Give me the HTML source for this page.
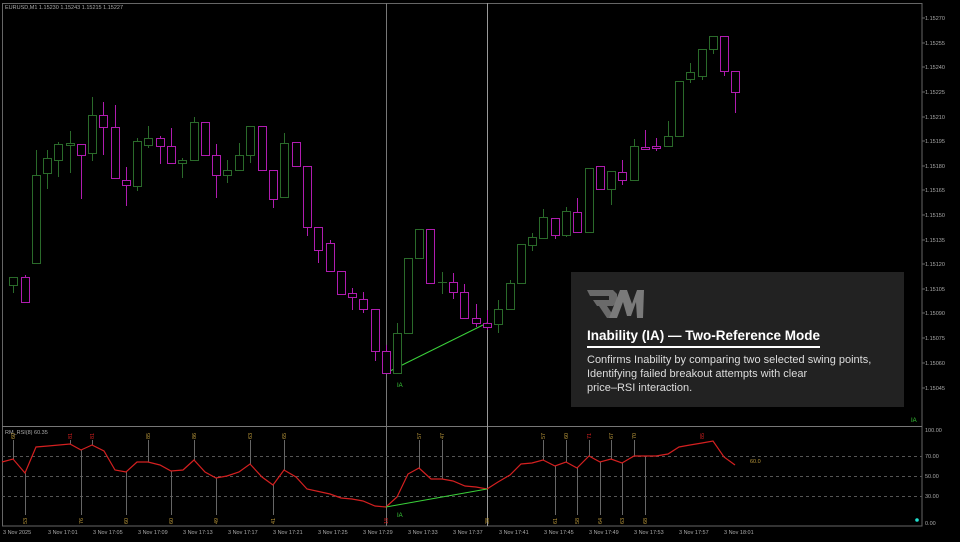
<!DOCTYPE html>
<html><head><meta charset="utf-8"><style>
html,body{margin:0;padding:0;background:#000;width:960px;height:542px;overflow:hidden}
svg{position:absolute;left:0;top:0}
.t{font-family:"Liberation Sans",sans-serif;font-size:5.5px;fill:#aaa}
.r{font-family:"Liberation Sans",sans-serif;font-size:5.5px;fill:#b8963a}
.rr{font-family:"Liberation Sans",sans-serif;font-size:5.5px;fill:#d02020}
#panel{position:absolute;left:571px;top:272px;width:333px;height:135px;background:#222}
#title{position:absolute;left:16px;top:56px;font-family:"Liberation Sans",sans-serif;font-size:13.5px;color:#fff;font-weight:bold;letter-spacing:0px;padding-bottom:3px;border-bottom:2px solid #fff}
#body{position:absolute;left:16px;top:81px;font-family:"Liberation Sans",sans-serif;font-size:11px;line-height:14px;color:#ddd;width:320px}
</style></head><body>
<svg width="960" height="542" viewBox="0 0 960 542">
<g fill="none" stroke="#888" stroke-width="1">
<rect x="2.5" y="3.5" width="919.5" height="522.5" stroke="#666"/>
<line x1="2" y1="426.5" x2="922" y2="426.5" stroke="#777"/>
<line x1="386.5" y1="3" x2="386.5" y2="526" stroke="#777"/>
<line x1="487.5" y1="3" x2="487.5" y2="526" stroke="#999"/>
</g>
<text x="5" y="9" class="t">EURUSD,M1  1.15230 1.15243 1.15215 1.15227</text>
<g class="t">
<text x="925" y="20">1.15270</text><text x="925" y="45">1.15255</text><text x="925" y="69">1.15240</text><text x="925" y="94">1.15225</text><text x="925" y="119">1.15210</text><text x="925" y="143">1.15195</text><text x="925" y="168">1.15180</text><text x="925" y="192">1.15165</text><text x="925" y="217">1.15150</text><text x="925" y="242">1.15135</text><text x="925" y="266">1.15120</text><text x="925" y="291">1.15105</text><text x="925" y="315">1.15090</text><text x="925" y="340">1.15075</text><text x="925" y="365">1.15060</text><text x="925" y="390">1.15045</text>
<text x="925" y="432">100.00</text><text x="925" y="458">70.00</text><text x="925" y="478">50.00</text><text x="925" y="498">30.00</text><text x="925" y="525">0.00</text>
<text x="3" y="534">3 Nov 2025</text><text x="48" y="534">3 Nov 17:01</text><text x="93" y="534">3 Nov 17:05</text><text x="138" y="534">3 Nov 17:09</text><text x="183" y="534">3 Nov 17:13</text><text x="228" y="534">3 Nov 17:17</text><text x="273" y="534">3 Nov 17:21</text><text x="318" y="534">3 Nov 17:25</text><text x="363" y="534">3 Nov 17:29</text><text x="408" y="534">3 Nov 17:33</text><text x="453" y="534">3 Nov 17:37</text><text x="499" y="534">3 Nov 17:41</text><text x="544" y="534">3 Nov 17:45</text><text x="589" y="534">3 Nov 17:49</text><text x="634" y="534">3 Nov 17:53</text><text x="679" y="534">3 Nov 17:57</text><text x="724" y="534">3 Nov 18:01</text>
<text x="5" y="434">RM_RSI(8) 60.35</text>
</g>
<g stroke="#666" stroke-width="1">
<line x1="922" y1="18" x2="925" y2="18"/><line x1="922" y1="43" x2="925" y2="43"/><line x1="922" y1="67" x2="925" y2="67"/><line x1="922" y1="92" x2="925" y2="92"/><line x1="922" y1="117" x2="925" y2="117"/><line x1="922" y1="141" x2="925" y2="141"/><line x1="922" y1="166" x2="925" y2="166"/><line x1="922" y1="190" x2="925" y2="190"/><line x1="922" y1="215" x2="925" y2="215"/><line x1="922" y1="240" x2="925" y2="240"/><line x1="922" y1="264" x2="925" y2="264"/><line x1="922" y1="289" x2="925" y2="289"/><line x1="922" y1="313" x2="925" y2="313"/><line x1="922" y1="338" x2="925" y2="338"/><line x1="922" y1="363" x2="925" y2="363"/><line x1="922" y1="388" x2="925" y2="388"/>
</g>
<g stroke="#555" stroke-dasharray="3,3" stroke-width="1">
<line x1="2" y1="456.5" x2="922" y2="456.5"/><line x1="2" y1="476.5" x2="922" y2="476.5"/><line x1="2" y1="496.5" x2="922" y2="496.5"/>
</g>
<g stroke="#666" stroke-width="1">
<line x1="13.5" y1="440" x2="13.5" y2="459"/><line x1="70.5" y1="440" x2="70.5" y2="444"/><line x1="92.5" y1="440" x2="92.5" y2="445"/><line x1="148.5" y1="440" x2="148.5" y2="462"/><line x1="194.5" y1="440" x2="194.5" y2="460"/><line x1="250.5" y1="440" x2="250.5" y2="464"/><line x1="284.5" y1="440" x2="284.5" y2="470"/><line x1="419.5" y1="440" x2="419.5" y2="468"/><line x1="442.5" y1="440" x2="442.5" y2="479"/><line x1="543.5" y1="440" x2="543.5" y2="460"/><line x1="566.5" y1="440" x2="566.5" y2="462"/><line x1="589.5" y1="440" x2="589.5" y2="456"/><line x1="611.5" y1="440" x2="611.5" y2="459"/><line x1="634.5" y1="440" x2="634.5" y2="456"/>
<line x1="25.5" y1="473" x2="25.5" y2="515"/><line x1="81.5" y1="450" x2="81.5" y2="515"/><line x1="126.5" y1="472" x2="126.5" y2="515"/><line x1="171.5" y1="471" x2="171.5" y2="515"/><line x1="216.5" y1="478" x2="216.5" y2="515"/><line x1="273.5" y1="485" x2="273.5" y2="515"/><line x1="555.5" y1="466" x2="555.5" y2="515"/><line x1="577.5" y1="468" x2="577.5" y2="515"/><line x1="600.5" y1="462" x2="600.5" y2="515"/><line x1="622.5" y1="463" x2="622.5" y2="515"/><line x1="645.5" y1="456" x2="645.5" y2="515"/>
</g>
<g class="r">
<text transform="translate(15,439) rotate(-90)">60</text><text transform="translate(150,439) rotate(-90)">85</text><text transform="translate(196,439) rotate(-90)">86</text><text transform="translate(252,439) rotate(-90)">63</text><text transform="translate(286,439) rotate(-90)">65</text><text transform="translate(421,439) rotate(-90)">57</text><text transform="translate(444,439) rotate(-90)">47</text><text transform="translate(545,439) rotate(-90)">57</text><text transform="translate(568,439) rotate(-90)">60</text><text transform="translate(613,439) rotate(-90)">67</text><text transform="translate(636,439) rotate(-90)">70</text>
<text transform="translate(27,524) rotate(-90)">53</text><text transform="translate(83,524) rotate(-90)">76</text><text transform="translate(128,524) rotate(-90)">60</text><text transform="translate(173,524) rotate(-90)">60</text><text transform="translate(218,524) rotate(-90)">49</text><text transform="translate(275,524) rotate(-90)">41</text><text transform="translate(489,524) rotate(-90)">38</text><text transform="translate(557,524) rotate(-90)">61</text><text transform="translate(579,524) rotate(-90)">58</text><text transform="translate(602,524) rotate(-90)">64</text><text transform="translate(624,524) rotate(-90)">63</text><text transform="translate(647,524) rotate(-90)">68</text>
<text x="750" y="463">60.0</text>
</g>
<g class="rr">
<text transform="translate(72,439) rotate(-90)">81</text><text transform="translate(94,439) rotate(-90)">81</text><text transform="translate(591,439) rotate(-90)">71</text><text transform="translate(704,439) rotate(-90)">85</text><text transform="translate(388,524) rotate(-90)">18</text>
</g>
<polyline fill="none" stroke="#d42020" stroke-width="1.2" points="2,462 13,459 25,473 36,447 48,446 70,444 81,450 92,445 104,451 115,470 126,472 137,462 148,462 160,465 171,471 183,470 194,460 205,472 216,478 227,476 239,472 250,464 262,477 273,485 284,470 296,477 307,489 330,494 341,498 352,499 363,501 375,506 386,507 397,497 408,474 419,468 431,479 442,479 453,481 465,486 476,487 487,489 498,482 510,475 521,464 532,463 543,460 555,466 566,462 577,468 589,456 600,462 611,459 622,463 634,456 645,456 656,456 668,454 679,447 690,445 702,443 713,441 724,457 735,465"/>
<line x1="386" y1="507" x2="487" y2="489" stroke="#3ad03a" stroke-width="1"/>
<line x1="386" y1="373" x2="487" y2="323" stroke="#3ad03a" stroke-width="1"/>
<text x="397" y="387" font-family="Liberation Sans" font-size="6" fill="#3ad03a">IA</text>
<text x="397" y="517" font-family="Liberation Sans" font-size="6" fill="#3ad03a">IA</text>
<text x="911" y="422" font-family="Liberation Sans" font-size="6" fill="#3ad03a">IA</text>
<circle cx="917" cy="520" r="1.8" fill="#20e0d0"/>
<g stroke="#2a6a2a" fill="#000" stroke-width="1">
<line x1="13.5" y1="277" x2="13.5" y2="293"/><rect x="9.5" y="277.5" width="8" height="8"/>
<line x1="36.5" y1="150" x2="36.5" y2="263"/><rect x="32.5" y="175.5" width="8" height="88"/>
<line x1="47.5" y1="150" x2="47.5" y2="189"/><rect x="43.5" y="158.5" width="8" height="15"/>
<line x1="58.5" y1="142" x2="58.5" y2="177"/><rect x="54.5" y="144.5" width="8" height="16"/>
<line x1="70.5" y1="131" x2="70.5" y2="173"/><rect x="66.5" y="143.5" width="8" height="2"/>
<line x1="92.5" y1="97" x2="92.5" y2="161"/><rect x="88.5" y="115.5" width="8" height="38"/>
<line x1="137.5" y1="138" x2="137.5" y2="191"/><rect x="133.5" y="141.5" width="8" height="45"/>
<line x1="148.5" y1="126" x2="148.5" y2="148"/><rect x="144.5" y="138.5" width="8" height="7"/>
<line x1="182.5" y1="158" x2="182.5" y2="178"/><rect x="178.5" y="160.5" width="8" height="3"/>
<line x1="194.5" y1="117" x2="194.5" y2="160"/><rect x="190.5" y="122.5" width="8" height="38"/>
<line x1="227.5" y1="160" x2="227.5" y2="183"/><rect x="223.5" y="170.5" width="8" height="5"/>
<line x1="239.5" y1="143" x2="239.5" y2="163"/><rect x="235.5" y="155.5" width="8" height="15"/>
<line x1="250.5" y1="126" x2="250.5" y2="163"/><rect x="246.5" y="126.5" width="8" height="29"/>
<line x1="284.5" y1="133" x2="284.5" y2="197"/><rect x="280.5" y="143.5" width="8" height="54"/>
<line x1="397.5" y1="323" x2="397.5" y2="373"/><rect x="393.5" y="333.5" width="8" height="40"/>
<rect x="404.5" y="258.5" width="8" height="75"/>
<rect x="415.5" y="229.5" width="8" height="29"/>
<line x1="442.5" y1="272" x2="442.5" y2="294"/><line x1="438" y1="282.5" x2="447" y2="282.5"/>
<line x1="498.5" y1="300" x2="498.5" y2="333"/><rect x="494.5" y="309.5" width="8" height="15"/>
<line x1="510.5" y1="280" x2="510.5" y2="309"/><rect x="506.5" y="283.5" width="8" height="26"/>
<rect x="517.5" y="244.5" width="8" height="39"/>
<line x1="532.5" y1="233" x2="532.5" y2="251"/><rect x="528.5" y="237.5" width="8" height="8"/>
<line x1="543.5" y1="209" x2="543.5" y2="238"/><rect x="539.5" y="217.5" width="8" height="21"/>
<line x1="566.5" y1="207" x2="566.5" y2="237"/><rect x="562.5" y="211.5" width="8" height="24"/>
<rect x="585.5" y="168.5" width="8" height="64"/>
<line x1="611.5" y1="171" x2="611.5" y2="205"/><rect x="607.5" y="171.5" width="8" height="18"/>
<line x1="634.5" y1="139" x2="634.5" y2="180"/><rect x="630.5" y="146.5" width="8" height="34"/>
<line x1="668.5" y1="121" x2="668.5" y2="146"/><rect x="664.5" y="136.5" width="8" height="10"/>
<rect x="675.5" y="81.5" width="8" height="55"/>
<line x1="690.5" y1="63" x2="690.5" y2="83"/><rect x="686.5" y="72.5" width="8" height="7"/>
<line x1="702.5" y1="49" x2="702.5" y2="80"/><rect x="698.5" y="49.5" width="8" height="27"/>
<line x1="713.5" y1="36" x2="713.5" y2="54"/><rect x="709.5" y="36.5" width="8" height="13"/>
</g>
<g stroke="#b01cb0" fill="#000" stroke-width="1">
<line x1="25.5" y1="275" x2="25.5" y2="302"/><rect x="21.5" y="277.5" width="8" height="25"/>
<line x1="81.5" y1="144" x2="81.5" y2="199"/><rect x="77.5" y="144.5" width="8" height="11"/>
<line x1="103.5" y1="102" x2="103.5" y2="155"/><rect x="99.5" y="115.5" width="8" height="12"/>
<line x1="115.5" y1="105" x2="115.5" y2="178"/><rect x="111.5" y="127.5" width="8" height="51"/>
<line x1="126.5" y1="167" x2="126.5" y2="206"/><rect x="122.5" y="180.5" width="8" height="5"/>
<line x1="160.5" y1="136" x2="160.5" y2="164"/><rect x="156.5" y="138.5" width="8" height="8"/>
<line x1="171.5" y1="128" x2="171.5" y2="163"/><rect x="167.5" y="146.5" width="8" height="17"/>
<rect x="201.5" y="122.5" width="8" height="33"/>
<line x1="216.5" y1="144" x2="216.5" y2="198"/><rect x="212.5" y="155.5" width="8" height="20"/>
<rect x="258.5" y="126.5" width="8" height="44"/>
<line x1="273.5" y1="170" x2="273.5" y2="208"/><rect x="269.5" y="170.5" width="8" height="29"/>
<rect x="292.5" y="142.5" width="8" height="24"/>
<line x1="307.5" y1="166" x2="307.5" y2="236"/><rect x="303.5" y="166.5" width="8" height="61"/>
<line x1="318.5" y1="227" x2="318.5" y2="263"/><rect x="314.5" y="227.5" width="8" height="23"/>
<line x1="330.5" y1="240" x2="330.5" y2="271"/><rect x="326.5" y="243.5" width="8" height="28"/>
<rect x="337.5" y="271.5" width="8" height="23"/>
<line x1="352.5" y1="288" x2="352.5" y2="310"/><rect x="348.5" y="293.5" width="8" height="4"/>
<line x1="363.5" y1="292" x2="363.5" y2="313"/><rect x="359.5" y="299.5" width="8" height="10"/>
<line x1="375.5" y1="309" x2="375.5" y2="361"/><rect x="371.5" y="309.5" width="8" height="42"/>
<line x1="386.5" y1="345" x2="386.5" y2="373"/><rect x="382.5" y="351.5" width="8" height="22"/>
<rect x="426.5" y="229.5" width="8" height="54"/>
<line x1="453.5" y1="273" x2="453.5" y2="299"/><rect x="449.5" y="282.5" width="8" height="10"/>
<line x1="464.5" y1="284" x2="464.5" y2="318"/><rect x="460.5" y="292.5" width="8" height="26"/>
<line x1="476.5" y1="304" x2="476.5" y2="327"/><rect x="472.5" y="318.5" width="8" height="5"/>
<line x1="487.5" y1="310" x2="487.5" y2="330"/><rect x="483.5" y="323.5" width="8" height="4"/>
<line x1="555.5" y1="218" x2="555.5" y2="239"/><rect x="551.5" y="218.5" width="8" height="17"/>
<line x1="577.5" y1="198" x2="577.5" y2="232"/><rect x="573.5" y="212.5" width="8" height="20"/>
<rect x="596.5" y="166.5" width="8" height="23"/>
<line x1="622.5" y1="160" x2="622.5" y2="185"/><rect x="618.5" y="172.5" width="8" height="8"/>
<line x1="645.5" y1="130" x2="645.5" y2="150"/><rect x="641.5" y="147.5" width="8" height="2"/>
<line x1="656.5" y1="138" x2="656.5" y2="151"/><rect x="652.5" y="146.5" width="8" height="2"/>
<line x1="724.5" y1="36" x2="724.5" y2="76"/><rect x="720.5" y="36.5" width="8" height="35"/>
<line x1="735.5" y1="71" x2="735.5" y2="113"/><rect x="731.5" y="71.5" width="8" height="21"/>
</g>
</svg>
<div id="panel">
<svg width="60" height="30" style="left:16px;top:18px" viewBox="0 0 60 30">
<polygon points="0,0 26,0 30,4 30,12 26,16 20,16 28,28 20,28 12,16 10,16 6,10 22,10 22,6 3,6" fill="#6a6a6a"/>
<polygon points="22,28 33,0 40,0 45,14 50,0 57,0 56,28 50,28 49,12 44,26 40,26 36,12 30,28" fill="#7a7a7a"/>
</svg>
<div id="title">Inability (IA) — Two-Reference Mode</div>
<div id="body">Confirms Inability by comparing two selected swing points,<br>Identifying failed breakout attempts with clear<br>price–RSI interaction.</div>
</div>
</body></html>
